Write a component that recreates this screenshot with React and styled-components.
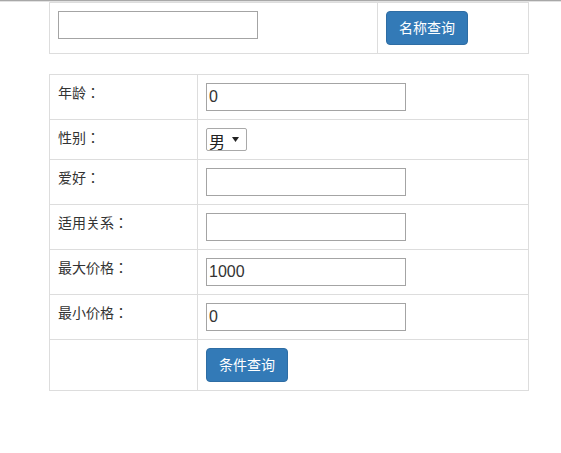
import styled, { createGlobalStyle } from 'styled-components';

const GlobalStyle = createGlobalStyle`
  body {
    margin: 0;
    background: #fff;
    font-family: "Liberation Sans", "Noto Sans CJK SC", sans-serif;
    font-size: 14px;
    line-height: 20px;
    color: #333;
  }
`

const TopRule = styled.div`
  border-top: 1px solid #a8a8a8;
  border-bottom: 1px solid #e2e2e2;
`

const Page = styled.div`
  padding-left: 49px;
`

const Table = styled.table`
  width: 480px;
  border-collapse: collapse;
  table-layout: fixed;
  margin-bottom: 20px;
`

const Cell = styled.td`
  border: 1px solid #ddd;
  padding: 8px;
  vertical-align: top;
  text-align: left;
`

const LabelCell = styled(Cell)`
  font-family: "Liberation Sans", "Noto Sans CJK JP", sans-serif;
  color: #333;
`

const TextInput = styled.input`
  box-sizing: border-box;
  width: 200px;
  height: 28px;
  padding: 1px 2px;
  margin: 0;
  border: 1px solid #a4a4a4;
  font-family: "Liberation Sans", "Noto Sans CJK SC", sans-serif;
  font-size: 16px;
  color: #333;
  display: block;
  outline: none;
`

const Select = styled.select`
  box-sizing: border-box;
  appearance: none;
  height: 23px;
  width: 41px;
  margin: 0;
  padding: 0 14px 0 2px;
  border: 1px solid #a9a9a9;
  border-radius: 2px;
  background: #fff url("data:image/svg+xml;utf8,<svg xmlns='http://www.w3.org/2000/svg' width='7' height='5'><path d='M0 0h7L3.5 5z' fill='%23222'/></svg>") no-repeat right 7px center;
  font-family: "Noto Sans CJK SC", sans-serif;
  font-size: 16px;
  color: #222;
  display: block;
`

const Button = styled.button`
  display: inline-block;
  padding: 6px 12px;
  margin: 0;
  font-family: "Liberation Sans", "Noto Sans CJK SC", sans-serif;
  font-size: 14px;
  line-height: 20px;
  color: #fff;
  background-color: #337ab7;
  border: 1px solid #2e6da4;
  border-radius: 4px;
  cursor: pointer;
`

const fields = [
  { label: '年龄：', value: '0' },
  { label: '性别：', select: true },
  { label: '爱好：', value: '' },
  { label: '适用关系：', value: '' },
  { label: '最大价格：', value: '1000' },
  { label: '最小价格：', value: '0' },
]

export default function App() {
  return (
    <>
      <GlobalStyle />
      <TopRule />
      <Page>
        <Table>
          <colgroup>
            <col style={{ width: 328 }} />
            <col />
          </colgroup>
          <tbody>
            <tr>
              <Cell><TextInput type="text" /></Cell>
              <Cell><Button>名称查询</Button></Cell>
            </tr>
          </tbody>
        </Table>

        <Table>
          <colgroup>
            <col style={{ width: 148 }} />
            <col />
          </colgroup>
          <tbody>
            {fields.map(f => (
              <tr key={f.label}>
                <LabelCell>{f.label}</LabelCell>
                <Cell>
                  {f.select ? (
                    <Select defaultValue="男">
                      <option>男</option>
                      <option>女</option>
                    </Select>
                  ) : (
                    <TextInput type="text" defaultValue={f.value} />
                  )}
                </Cell>
              </tr>
            ))}
            <tr>
              <LabelCell />
              <Cell><Button>条件查询</Button></Cell>
            </tr>
          </tbody>
        </Table>
      </Page>
    </>
  )
}
